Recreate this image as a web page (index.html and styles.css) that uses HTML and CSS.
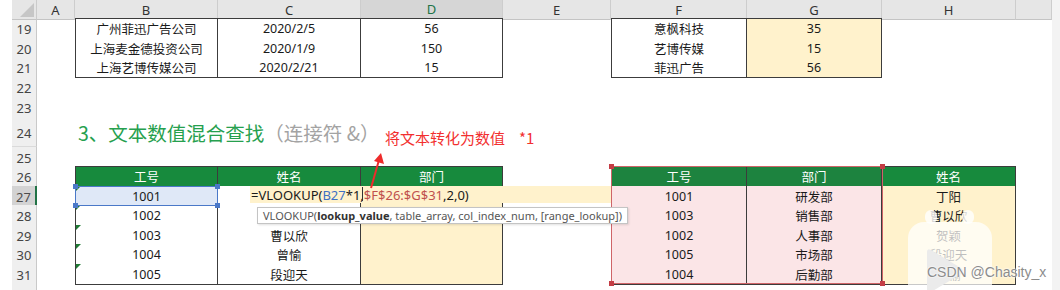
FILE: index.html
```html
<!DOCTYPE html>
<html lang="zh-CN">
<head>
<meta charset="utf-8">
<title>VLOOKUP 文本数值混合查找</title>
<link rel="stylesheet" href="styles.css">
</head>
<body>
<div class="sheet">
  <div class="grid">
    <div class="row hd">
      <div class="corner"><span class="tri"></span></div>
      <div class="ch">A</div><div class="ch">B</div><div class="ch">C</div><div class="ch sel">D</div><div class="ch">E</div><div class="ch">F</div><div class="ch">G</div><div class="ch">H</div><div class="ch"></div>
    </div>
    <div class="row">
      <div class="rh">19</div><div></div>
      <div class="t tl tt">广州菲迅广告公司</div><div class="t tt">2020/2/5</div><div class="t tt">56</div><div></div>
      <div class="t tl tt">意枫科技</div><div class="t tt y">35</div>
    </div>
    <div class="row h19">
      <div class="rh">20</div><div></div>
      <div class="t tl">上海麦金德投资公司</div><div class="t">2020/1/9</div><div class="t">150</div><div></div>
      <div class="t tl">艺博传媒</div><div class="t y">15</div>
    </div>
    <div class="row">
      <div class="rh">21</div><div></div>
      <div class="t tl">上海艺博传媒公司</div><div class="t">2020/2/21</div><div class="t">15</div><div></div>
      <div class="t tl">菲迅广告</div><div class="t y">56</div>
    </div>
    <div class="row"><div class="rh">22</div></div>
    <div class="row"><div class="rh">23</div></div>
    <div class="row h30">
      <div class="rh">24</div><div></div>
      <div class="title"><span class="title-main">3、文本数值混合查找</span><span class="title-sub">（连接符 &amp;）</span></div>
    </div>
    <div class="row h19"><div class="rh">25</div></div>
    <div class="row">
      <div class="rh">26</div><div></div>
      <div class="t tl tt g">工号</div><div class="t tt g">姓名</div><div class="t tt g">部门</div><div></div>
      <div class="t tl tt g g2">工号</div><div class="t tt g g2">部门</div><div class="t tt g">姓名</div>
    </div>
    <div class="row h19">
      <div class="rh sel">27</div><div></div>
      <div class="t tl num b">1001</div><div class="t"></div><div class="t y edit"></div><div></div>
      <div class="t tl p">1001</div><div class="t p">研发部</div><div class="t y">丁阳</div>
    </div>
    <div class="row">
      <div class="rh">28</div><div></div>
      <div class="t tl num">1002</div><div class="t"></div><div class="t y"></div><div></div>
      <div class="t tl p">1003</div><div class="t p">销售部</div><div class="t y">曹以欣</div>
    </div>
    <div class="row h19">
      <div class="rh">29</div><div></div>
      <div class="t tl num">1003</div><div class="t">曹以欣</div><div class="t y"></div><div></div>
      <div class="t tl p">1002</div><div class="t p">人事部</div><div class="t y">贺颖</div>
    </div>
    <div class="row">
      <div class="rh">30</div><div></div>
      <div class="t tl num">1004</div><div class="t">曾愉</div><div class="t y"></div><div></div>
      <div class="t tl p">1005</div><div class="t p">市场部</div><div class="t y">段迎天</div>
    </div>
    <div class="row h19">
      <div class="rh">31</div><div></div>
      <div class="t tl num">1005</div><div class="t">段迎天</div><div class="t y"></div><div></div>
      <div class="t tl p">1004</div><div class="t p">后勤部</div><div class="t y">曾愉</div>
    </div>
    <div class="row"><div class="rh">32</div></div>
  </div>
  <div class="vscroll"></div>

  <div class="range-blue"><i class="sq s-tl"></i><i class="sq s-tr"></i><i class="sq s-bl"></i><i class="sq s-br"></i></div>
  <div class="range-red"><i class="sq s-tl"></i><i class="sq s-tr"></i><i class="sq s-bl"></i><i class="sq s-br"></i></div>

  <div class="editbox"><span class="fx">=VLOOKUP(</span><span class="ref-b">B27</span><span class="fx">*1,</span><span class="ref-r">$F$26:$G$31</span><span class="fx">,2,0)</span><i class="caret"></i></div>

  <div class="tip">VLOOKUP(<b>lookup_value</b>, table_array, col_index_num, [range_lookup])</div>

  <div class="note">将文本转化为数值<span class="note-x">*1</span></div>
  <svg class="arrow" width="30" height="42" viewBox="0 0 30 42">
    <line x1="11" y1="38" x2="19" y2="10" stroke="#ee2b2b" stroke-width="2"/>
    <polygon points="21,3 24,14 14,11" fill="#ee2b2b"/>
  </svg>

  <div class="wm">
    <i class="ear ear1"></i><i class="ear ear2"></i>
    <div class="wm-box">
      <svg class="play" width="50" height="50" viewBox="0 0 50 50"><path d="M10 6 Q10 2 14 4 L44 22 Q48 25 44 28 L14 46 Q10 48 10 44 Z" fill="#ebebeb"/></svg>
    </div>
  </div>
  <div class="wm-text">CSDN @Chasity_x</div>
</div>
</body>
</html>
```

FILE: styles.css
```css
html, body {
  margin: 0;
  background: #fff;
}
body {
  font-family: "Noto Sans", "Noto Sans CJK SC", sans-serif;
}
.sheet {
  position: relative;
  width: 1060px;
  height: 290px;
  overflow: hidden;
  display: flex;
  padding-left: 12px;
  box-sizing: border-box;
}
.grid {
  width: 1040px;
}
.vscroll {
  width: 8px;
  background: #f3f3f3;
}
.row {
  display: grid;
  grid-template-columns: 25px 38px 143px 143px 142px 108px 136px 135px 134px 36px;
  height: 20px;
}
.row.hd { height: 18px; }
.row.h19 { height: 19px; }
.row.h30 { height: 30px; }
.row > div {
  box-sizing: border-box;
  display: flex;
  align-items: center;
  justify-content: center;
  font-size: 12.5px;
  color: #1a1a1a;
  min-width: 0;
}
.corner {
  position: relative;
  background: #e6e6e6;
  border-right: 1px solid #cbcbcb;
  border-bottom: 1px solid #c4c4c4;
}
.corner .tri {
  position: absolute;
  right: 2px;
  bottom: 2px;
  width: 0;
  height: 0;
  border-left: 14px solid transparent;
  border-bottom: 14px solid #c6c6c6;
}
.row > .ch {
  background: #e6e6e6;
  border-right: 1px solid #cdcdcd;
  border-bottom: 1px solid #c4c4c4;
  font-size: 13px;
  color: #333;
}
.row > .ch.sel {
  background: #d6d6d6;
  color: #217346;
  border-bottom: 2px solid #217346;
}
.row > .rh {
  background: #efefef;
  border-right: 1px solid #c9c9c9;
  border-bottom: 1px solid #dadada;
  color: #444;
  font-size: 13px;
  padding-top: 2px;
}
.row > .rh.sel {
  background: #d3d3d3;
  border-right: 2px solid #217346;
  color: #4d4d4d;
}
.row > .t {
  background: #fff;
  border-right: 1px solid #3c3c3c;
  border-bottom: 1px solid #3c3c3c;
}
.row > .tl { border-left: 1px solid #3c3c3c; }
.row > .tt { border-top: 1px solid #3c3c3c; }
.row > .g {
  background: #178a3d;
  color: #fff;
}
.row > .g2 { background: #1d833f; }
.row > .y { background: #fff2cc; }
.row > .p { background: #fbe5e7; }
.row > .b { background: #dfe8f7; }
.row > .edit { border-bottom: 2px solid #217346; }
.row > .num { position: relative; }
.row > .num::before {
  content: "";
  position: absolute;
  left: 0;
  top: 0;
  border-top: 5px solid #1f7a35;
  border-right: 5px solid transparent;
}
.row > .title {
  grid-column: 3 / -1;
  justify-content: flex-start;
  padding-left: 3px;
  padding-top: 1px;
  font-family: "Noto Sans CJK SC", sans-serif;
  font-size: 19.5px;
  white-space: nowrap;
}
.title-main { color: #26a04e; }
.title-sub { color: #a3a3a3; }

/* range highlights */
.range-blue {
  position: absolute;
  left: 75px;
  top: 186px;
  width: 143px;
  height: 20px;
  box-sizing: border-box;
  border: 1.5px solid #4a78c8;
}
.range-red {
  position: absolute;
  left: 611px;
  top: 166px;
  width: 272px;
  height: 118px;
  box-sizing: border-box;
  border: 1.5px solid #cf6468;
}
.sq {
  position: absolute;
  width: 5px;
  height: 5px;
}
.range-blue .sq { background: #4a78c8; }
.range-red .sq { background: #c43d45; }
.s-tl { left: -3px; top: -3px; }
.s-tr { right: -3px; top: -3px; }
.s-bl { left: -3px; bottom: -3px; }
.s-br { right: -3px; bottom: -3px; }

/* formula edit overlay */
.editbox {
  position: absolute;
  left: 250px;
  top: 186px;
  width: 361px;
  height: 17px;
  background: #fff2cc;
  font-size: 13px;
  line-height: 18px;
  padding-left: 1px;
  box-sizing: border-box;
  white-space: nowrap;
}
.fx { color: #1a1a1a; }
.ref-b { color: #3e70c4; }
.ref-r { color: #c0504d; }
.caret {
  position: absolute;
  left: 112px;
  top: 1px;
  width: 1px;
  height: 14px;
  background: #333;
}

/* function tooltip */
.tip {
  position: absolute;
  left: 257px;
  top: 207px;
  width: 371px;
  height: 17px;
  box-sizing: border-box;
  background: #fff;
  border: 1px solid #c4c4c4;
  box-shadow: 1px 1px 2px rgba(0, 0, 0, 0.12);
  padding-left: 5px;
  font-size: 11px;
  line-height: 15px;
  color: #555;
  white-space: nowrap;
}
.tip b { color: #333; }

/* annotation */
.note {
  position: absolute;
  left: 385px;
  top: 128px;
  font-family: "Noto Sans CJK SC", sans-serif;
  font-size: 15px;
  line-height: 20px;
  color: #f22f2f;
  white-space: nowrap;
}
.note-x {
  margin-left: 14px;
}
.arrow {
  position: absolute;
  left: 360px;
  top: 150px;
}

/* watermark */
.wm {
  position: absolute;
  left: 908px;
  top: 208px;
  width: 86px;
  height: 100px;
}
.ear {
  position: absolute;
  top: 2px;
  width: 12px;
  height: 14px;
  border-radius: 6px;
  background: rgba(255, 255, 255, 0.8);
}
.ear1 { left: 17px; }
.ear2 { left: 54px; }
.wm-box {
  position: absolute;
  left: 0;
  top: 14px;
  width: 84px;
  height: 86px;
  border-radius: 16px;
  background: rgba(255, 255, 255, 0.72);
}
.play {
  position: absolute;
  left: 9px;
  top: 24px;
}
.wm-text {
  position: absolute;
  left: 927px;
  top: 263px;
  font-family: "Liberation Sans", Arial, sans-serif;
  font-size: 14px;
  line-height: 18px;
  color: #8c8c8c;
  text-shadow: 0 0 2px #fff, 0 0 2px #fff;
  white-space: nowrap;
}
```
